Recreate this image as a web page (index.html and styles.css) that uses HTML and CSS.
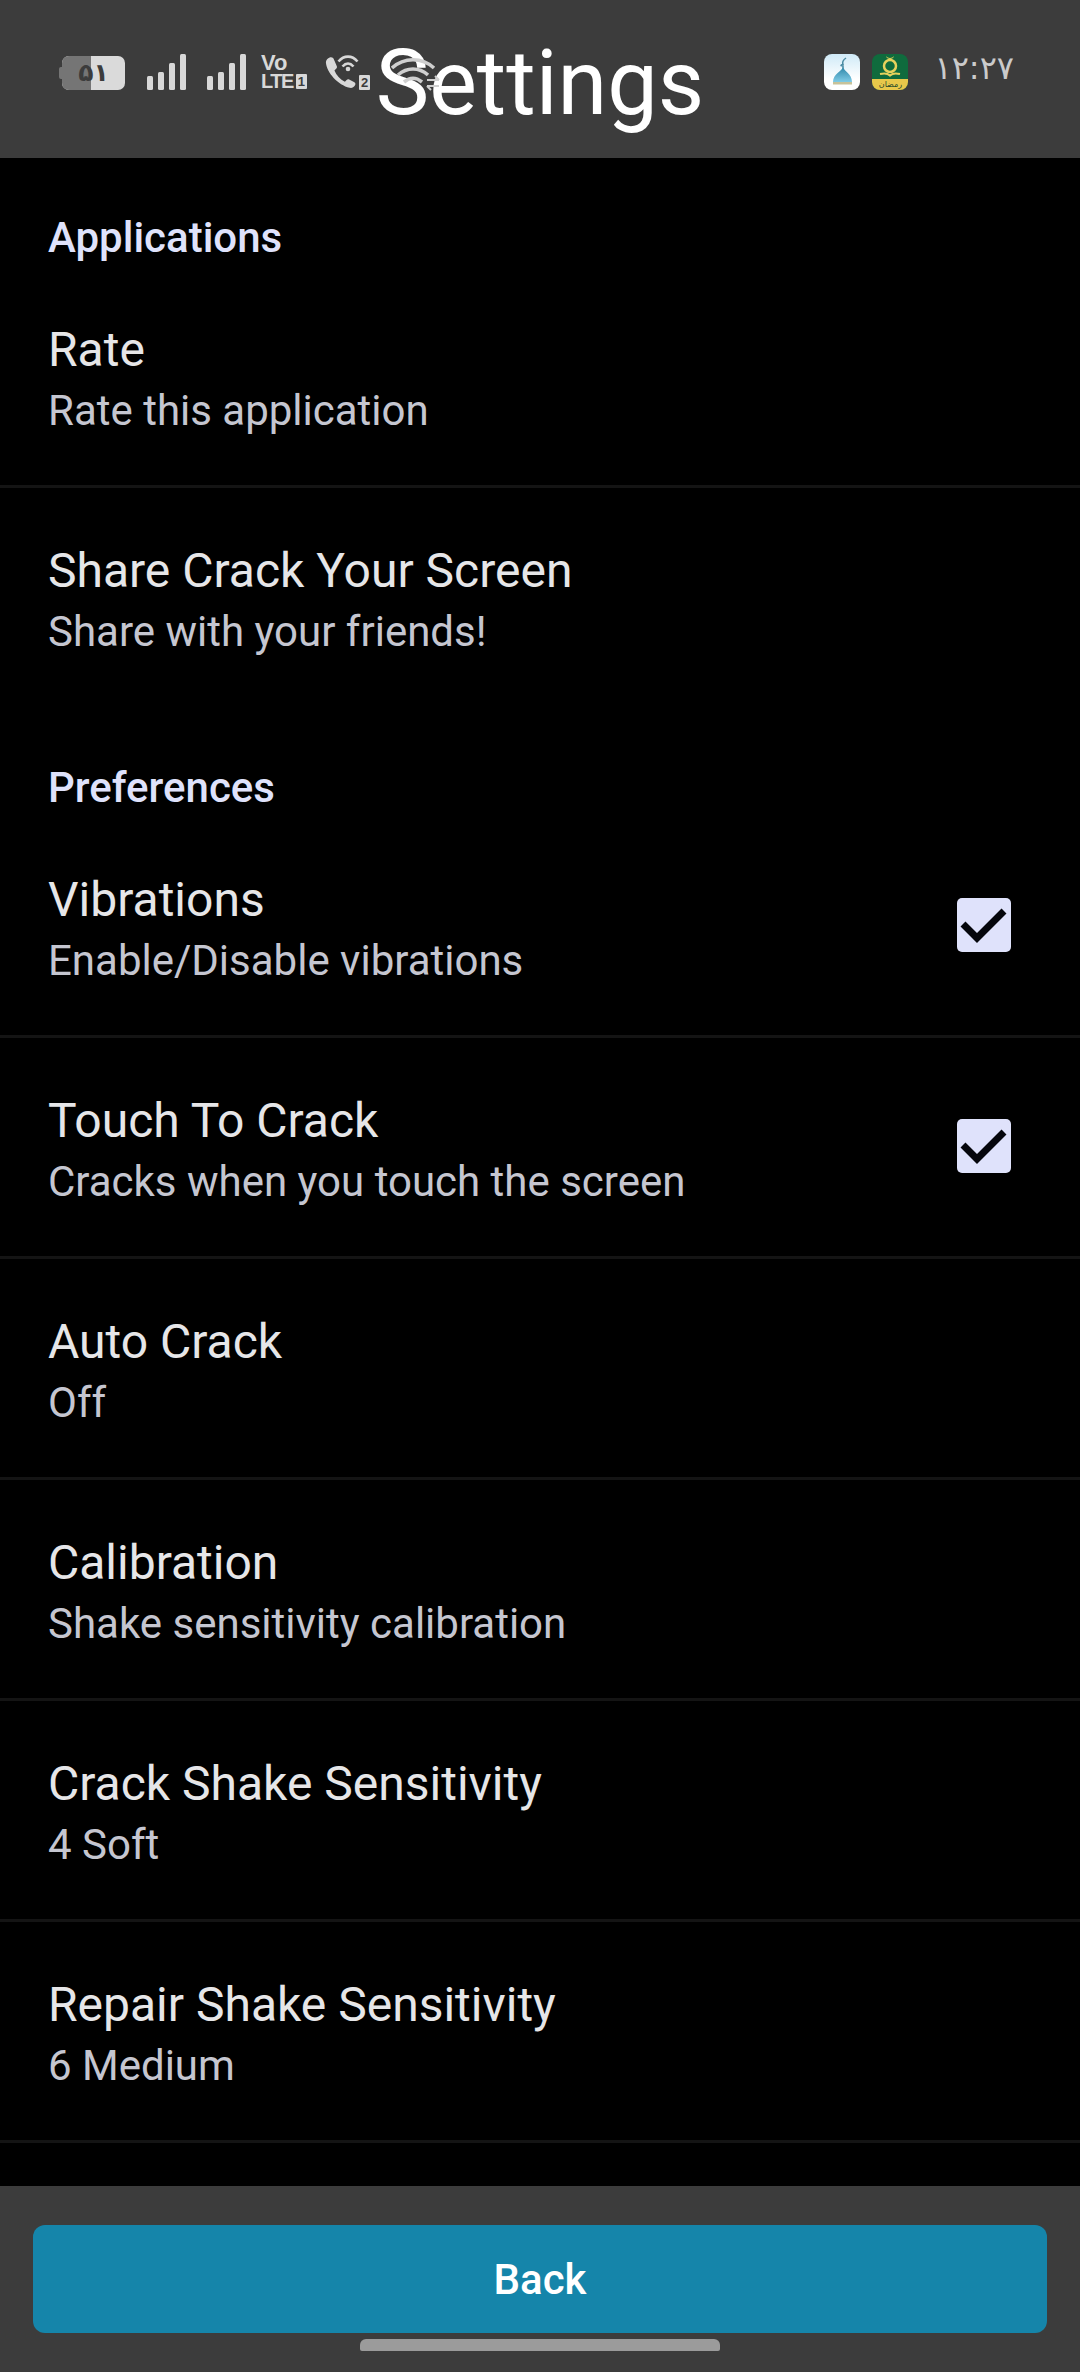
FILE: index.html
```html
<!DOCTYPE html>
<html lang="en">
<head>
    <meta charset="UTF-8">
    <meta name="viewport" content="width=device-width, initial-scale=1.0">
    <title>Settings</title>
    <link rel="stylesheet" href="styles.css">
</head>
<body>

    <div class="screen">
        <header class="app-bar">
            <h1>Settings</h1>
        </header>

        <div class="status-bar">
            <div class="battery">
                <span class="battery-nub"></span>
                <span class="battery-used"></span>
                <span class="battery-level">۵۱</span>
            </div>
            <svg class="signal" viewBox="0 0 39 36">
                <rect x="0" y="22" width="6" height="14" rx="1.5"/>
                <rect x="11" y="18" width="6" height="18" rx="1.5"/>
                <rect x="22" y="9" width="6" height="27" rx="1.5"/>
                <rect x="33" y="0" width="6" height="36" rx="1.5"/>
            </svg>
            <svg class="signal" viewBox="0 0 39 36">
                <rect x="0" y="22" width="6" height="14" rx="1.5"/>
                <rect x="11" y="18" width="6" height="18" rx="1.5"/>
                <rect x="22" y="9" width="6" height="27" rx="1.5"/>
                <rect x="33" y="0" width="6" height="36" rx="1.5"/>
            </svg>
            <div class="volte">
                <span class="volte-top">Vo</span>
                <span class="volte-bottom">LTE<span class="sim-chip">1</span></span>
            </div>
            <div class="wifi-call">
                <svg class="wifi-call-icon" viewBox="0 0 47 36">
                    <path transform="translate(1 2) scale(.95)" d="M6 1.500c-2 .6-4 2.600-4 5 .6 11 13 24 25 27 2.500.6 5-1 6-3.500.3-1-.2-1.800-1-2.300l-5.500-3c-1-.5-2-.3-2.700.5l-1.800 2c-5-2.500-9-7-11-12l2-2c.7-.7.9-1.700.4-2.600L10 2.500C9 1.500 7.500 1 6 1.500z"/>
                    <path class="wave" d="M15.500 7.500C21 1 29 1 34.500 7.500"/>
                    <path class="wave" d="M19.500 12.500c3.500-4 7.500-4 11 0"/>
                    <circle cx="25" cy="15" r="2.300"/>
                </svg>
                <span class="sim-chip sim-chip-two">2</span>
            </div>
            <svg class="wifi" viewBox="0 0 49 34">
                <path d="M1 11C13 0 31 0 43 11"/>
                <path d="M7 18c9-8 21-8 30 0"/>
                <path d="M13 25c6-5 12-5 18 0"/>
                <path class="wifi-arrows" d="M36 23h12m-4-4 4 4M36 29h12m-12 0 4 4"/>
            </svg>

            <div class="status-right">
                <div class="notif-icon notif-mosque">
                    <svg viewBox="0 0 36 36">
                        <defs>
                            <linearGradient id="domeFill" x1="0" y1="0" x2="0" y2="1">
                                <stop offset="0" stop-color="#2f86a8"/>
                                <stop offset="1" stop-color="#7fcbe6"/>
                            </linearGradient>
                        </defs>
                        <path class="spire" d="M22 4c-3 2-4 4-3 6.500-1 0-2 .5-2 1 1 .3 2 .3 2 0V15"/>
                        <path class="dome" d="M19 13c1 4 9 7 9 15H9c0-8 9-11 10-15z"/>
                        <rect class="dome-base" x="9" y="28" width="19" height="2.500"/>
                    </svg>
                </div>
                <div class="notif-icon notif-ramadan">
                    <svg viewBox="0 0 36 25">
                        <path class="moon" d="M14 2c1.500 2.500 6.500 2.500 8 0-.5 4-7.500 4-8 0z"/>
                        <circle class="moon-ring" cx="18" cy="12" r="6"/>
                        <path class="moon-book" d="M8 20c4-1 8-.5 10 1.500 2-2 6-2.500 10-1.500"/>
                    </svg>
                    <span class="ramadan-label">رمضان</span>
                </div>
                <span class="clock">۱۲:۲۷</span>
            </div>
        </div>

        <main class="settings">
            <h2 class="group-title">Applications</h2>
            <div class="row">
                <div class="row-text">
                    <div class="row-title">Rate</div>
                    <div class="row-summary">Rate this application</div>
                </div>
            </div>
            <div class="row row-last">
                <div class="row-text">
                    <div class="row-title">Share Crack Your Screen</div>
                    <div class="row-summary">Share with your friends!</div>
                </div>
            </div>

            <h2 class="group-title">Preferences</h2>
            <div class="row">
                <div class="row-text">
                    <div class="row-title">Vibrations</div>
                    <div class="row-summary">Enable/Disable vibrations</div>
                </div>
                <span class="check">
                    <svg viewBox="0 0 54 54"><path d="M6 26l14 14L47 13"/></svg>
                </span>
            </div>
            <div class="row">
                <div class="row-text">
                    <div class="row-title">Touch To Crack</div>
                    <div class="row-summary">Cracks when you touch the screen</div>
                </div>
                <span class="check">
                    <svg viewBox="0 0 54 54"><path d="M6 26l14 14L47 13"/></svg>
                </span>
            </div>
            <div class="row">
                <div class="row-text">
                    <div class="row-title">Auto Crack</div>
                    <div class="row-summary">Off</div>
                </div>
            </div>
            <div class="row">
                <div class="row-text">
                    <div class="row-title">Calibration</div>
                    <div class="row-summary">Shake sensitivity calibration</div>
                </div>
            </div>
            <div class="row">
                <div class="row-text">
                    <div class="row-title">Crack Shake Sensitivity</div>
                    <div class="row-summary">4 Soft</div>
                </div>
            </div>
            <div class="row">
                <div class="row-text">
                    <div class="row-title">Repair Shake Sensitivity</div>
                    <div class="row-summary">6 Medium</div>
                </div>
            </div>
        </main>

        <footer class="bottom-bar">
            <button class="back-btn">Back</button>
            <div class="home-pill"></div>
        </footer>
    </div>

</body>
</html>
```

FILE: styles.css
```css
* {
    box-sizing: border-box;
}

html, body {
    margin: 0;
    padding: 0;
    background-color: #000;
}

body {
    font-family: Roboto, sans-serif;
}

.screen {
    position: relative;
    width: 1080px;
    height: 2372px;
    display: flex;
    flex-direction: column;
    overflow: hidden;
    background-color: #000;
}

.app-bar {
    height: 158px;
    flex-shrink: 0;
    background-color: #3c3c3c;
    display: flex;
    justify-content: center;
    align-items: flex-start;
}

.app-bar h1 {
    margin: 0;
    padding-top: 28px;
    font-size: 90px;
    line-height: 112px;
    font-weight: 400;
    color: #fff;
}

/* status bar sits over the app bar */
.status-bar {
    position: absolute;
    top: 54px;
    left: 0;
    width: 1080px;
    height: 40px;
    padding: 0 66px 0 59px;
    display: flex;
    align-items: flex-start;
    color: #d8d8d8;
}

.battery {
    position: relative;
    width: 63px;
    height: 34px;
    margin-top: 2px;
    margin-left: 3px;
    background-color: #dadada;
    border-radius: 7px;
    display: flex;
    justify-content: center;
    align-items: center;
}

.battery-nub {
    position: absolute;
    left: -3px;
    top: 11px;
    width: 4px;
    height: 12px;
    background-color: #757575;
    border-radius: 2px 0 0 2px;
}

.battery-used {
    position: absolute;
    left: 0;
    top: 0;
    width: 29px;
    height: 34px;
    background-color: #757575;
    border-radius: 7px 0 0 7px;
}

.battery-level {
    position: relative;
    font-family: "DejaVu Sans", sans-serif;
    font-weight: 700;
    font-size: 25px;
    line-height: 34px;
    color: #3c3c3c;
}

.signal {
    width: 39px;
    height: 36px;
    margin-left: 22px;
    fill: #d8d8d8;
}

.signal + .signal {
    margin-left: 21px;
}

.volte {
    width: 46px;
    margin-left: 15px;
    display: flex;
    flex-direction: column;
    font-family: "Liberation Sans", sans-serif;
    font-weight: 700;
    color: #d8d8d8;
}

.volte-top {
    font-size: 22px;
    line-height: 18px;
}

.volte-bottom {
    display: flex;
    font-size: 20px;
    line-height: 18px;
    letter-spacing: -1.5px;
}

.sim-chip {
    display: inline-block;
    width: 11px;
    height: 15px;
    margin-left: 3px;
    margin-top: 2px;
    background-color: #d8d8d8;
    color: #3c3c3c;
    font-family: "Liberation Sans", sans-serif;
    font-size: 13px;
    font-weight: 700;
    line-height: 15px;
    text-align: center;
    letter-spacing: 0;
    border-radius: 1px;
}

.wifi-call {
    position: relative;
    width: 47px;
    height: 36px;
    margin-left: 16px;
}

.wifi-call-icon {
    display: block;
    width: 47px;
    height: 36px;
    fill: #d8d8d8;
}

.wifi-call-icon .wave {
    fill: none;
    stroke: #d8d8d8;
    stroke-width: 2.600;
}

.sim-chip-two {
    position: absolute;
    left: 36px;
    top: 21px;
    margin: 0;
}

.wifi {
    width: 49px;
    height: 34px;
    margin-top: 3px;
    margin-left: 21px;
    fill: none;
    stroke: #cfcfcf;
    stroke-width: 3.600;
}

.wifi .wifi-arrows {
    stroke-width: 2;
}

.status-right {
    margin-left: auto;
    display: flex;
    align-items: flex-start;
}

.notif-icon {
    width: 36px;
    height: 36px;
    border-radius: 8px;
    overflow: hidden;
}

.notif-mosque {
    background: linear-gradient(#cfeaf7, #ffffff 70%);
}

.notif-mosque svg {
    display: block;
    width: 36px;
    height: 36px;
}

.spire {
    fill: none;
    stroke: #4a8ba3;
    stroke-width: 1.500;
}

.dome {
    fill: url(#domeFill);
}

.dome-base {
    fill: #c7c29a;
}

.notif-ramadan {
    margin-left: 12px;
    background-color: #0f6b3d;
}

.notif-ramadan svg {
    display: block;
    width: 36px;
    height: 25px;
}

.moon {
    fill: #e6d25c;
}

.moon-ring {
    fill: #0f6b3d;
    stroke: #e6d25c;
    stroke-width: 2.500;
}

.moon-book {
    fill: none;
    stroke: #e6d25c;
    stroke-width: 2;
}

.ramadan-label {
    display: block;
    height: 11px;
    background-color: #e8c84a;
    color: #24492a;
    font-family: "DejaVu Sans", sans-serif;
    font-size: 8px;
    line-height: 11px;
    text-align: center;
}

.clock {
    margin-left: 26px;
    font-family: "DejaVu Sans", sans-serif;
    font-size: 32px;
    line-height: 28px;
    color: #cbcbcb;
}

.settings {
    flex: 1;
    padding-top: 1px;
    overflow: hidden;
}

.group-title {
    margin: 0;
    padding-top: 56px;
    padding-left: 48px;
    height: 108px;
    font-size: 42px;
    line-height: 46px;
    font-weight: 500;
    color: #dfe2fb;
}

.row {
    height: 221px;
    padding: 50px 69px 0 48px;
    display: flex;
    justify-content: space-between;
    border-bottom: 3px solid #141414;
}

.row-last {
    border-bottom: none;
}

.row-title {
    font-size: 48px;
    line-height: 66px;
    color: #e6e6e8;
}

.row-summary {
    font-size: 42px;
    line-height: 56px;
    color: #c5c6d0;
}

.check {
    width: 54px;
    height: 54px;
    margin-top: 31px;
    background-color: #dfe2fb;
    border-radius: 5px;
}

.check svg {
    display: block;
    width: 54px;
    height: 54px;
    fill: none;
    stroke: #05060c;
    stroke-width: 7;
}

.bottom-bar {
    position: absolute;
    left: 0;
    bottom: 0;
    width: 1080px;
    height: 186px;
    padding: 39px 33px 0;
    background-color: #3c3c3c;
}

.back-btn {
    display: block;
    width: 100%;
    height: 108px;
    border: none;
    border-radius: 12px;
    background-color: #1585aa;
    color: #fff;
    font-family: Roboto, sans-serif;
    font-size: 42px;
    font-weight: 500;
}

.home-pill {
    width: 360px;
    height: 12px;
    margin: 6px auto 0;
    background-color: #9b9b9b;
    border-radius: 6px 6px 2px 2px;
}
```
